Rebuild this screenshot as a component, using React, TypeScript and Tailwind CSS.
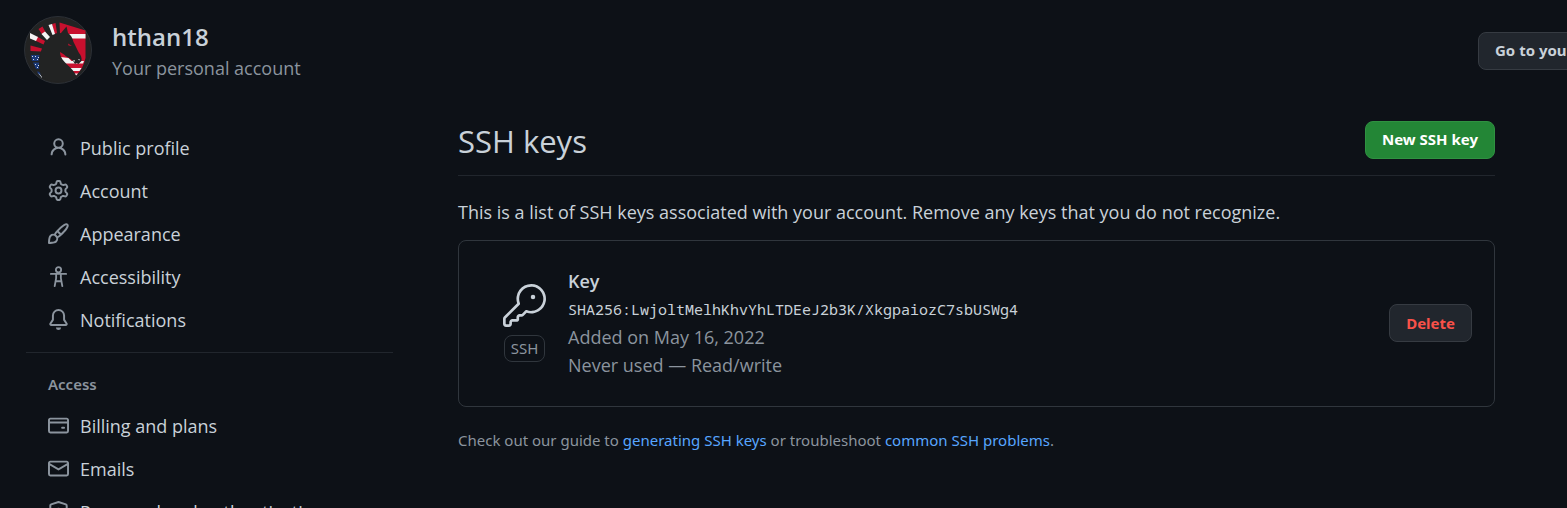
import type { ReactNode } from "react";

function Octicon({ children }: { children: ReactNode }) {
  return (
    <svg viewBox="0 0 16 16" className="size-[21px] shrink-0" fill="#8b949e" aria-hidden="true">
      {children}
    </svg>
  );
}

const icons = {
  person: (
    <Octicon>
      <path d="M10.561 8.073a6.005 6.005 0 0 1 3.432 5.142.75.75 0 1 1-1.498.07 4.5 4.5 0 0 0-8.99 0 .75.75 0 0 1-1.498-.07 6.004 6.004 0 0 1 3.431-5.142 3.999 3.999 0 1 1 5.123 0ZM10.5 5a2.5 2.5 0 1 0-5 0 2.5 2.5 0 0 0 5 0Z" />
    </Octicon>
  ),
  gear: (
    <Octicon>
      <path d="M8 0a8.2 8.2 0 0 1 .701.031C9.444.095 9.99.645 10.16 1.29l.288 1.107c.018.066.079.158.212.224.231.114.454.243.668.386.123.082.233.09.299.071l1.103-.303c.644-.176 1.392.021 1.82.63.27.385.506.792.704 1.218.315.675.111 1.422-.364 1.891l-.814.806c-.049.048-.098.147-.088.294.016.257.016.515 0 .772-.01.147.038.246.088.294l.814.806c.475.469.679 1.216.364 1.891a7.977 7.977 0 0 1-.704 1.217c-.428.61-1.176.807-1.82.63l-1.102-.302c-.067-.019-.177-.011-.3.071a5.909 5.909 0 0 1-.668.386c-.133.066-.194.158-.211.224l-.29 1.106c-.168.646-.715 1.196-1.458 1.26a8.006 8.006 0 0 1-1.402 0c-.743-.064-1.289-.614-1.458-1.26l-.289-1.106c-.018-.066-.079-.158-.212-.224a5.738 5.738 0 0 1-.668-.386c-.123-.082-.233-.09-.299-.071l-1.103.303c-.644.176-1.392-.021-1.82-.63a8.12 8.12 0 0 1-.704-1.218c-.315-.675-.111-1.422.363-1.891l.815-.806c.05-.048.098-.147.088-.294a6.214 6.214 0 0 1 0-.772c.01-.147-.038-.246-.088-.294l-.815-.806C.635 6.045.431 5.298.746 4.623a7.92 7.92 0 0 1 .704-1.217c.428-.61 1.176-.807 1.82-.63l1.102.302c.067.019.177.011.3-.071.214-.143.437-.272.668-.386.133-.066.194-.158.211-.224l.29-1.106C6.009.645 6.556.095 7.299.03 7.53.01 7.764 0 8 0Zm-.571 1.525c-.036.003-.108.036-.137.146l-.289 1.105c-.147.561-.549.967-.998 1.189-.173.086-.34.183-.5.29-.417.278-.97.423-1.529.27l-1.103-.303c-.109-.03-.175.016-.195.045-.22.312-.412.644-.573.99-.014.031-.021.11.059.19l.815.806c.411.406.562.957.53 1.456a4.709 4.709 0 0 0 0 .582c.032.499-.119 1.05-.53 1.456l-.815.806c-.081.08-.073.159-.059.19.162.346.353.677.573.989.02.03.085.076.195.046l1.102-.303c.56-.153 1.113-.008 1.53.27.161.107.328.204.501.29.447.222.85.629.997 1.189l.289 1.105c.029.109.101.143.137.146a6.6 6.6 0 0 0 1.142 0c.036-.003.108-.036.137-.146l.289-1.105c.147-.561.549-.967.998-1.189.173-.086.34-.183.5-.29.417-.278.97-.423 1.529-.27l1.103.303c.109.029.175-.016.195-.045.22-.313.411-.644.573-.99.014-.031.021-.11-.059-.19l-.815-.806c-.411-.406-.562-.957-.53-1.456a4.709 4.709 0 0 0 0-.582c-.032-.499.119-1.05.53-1.456l.815-.806c.081-.08.073-.159.059-.19a6.464 6.464 0 0 0-.573-.989c-.02-.03-.085-.076-.195-.046l-1.102.303c-.56.153-1.113.008-1.53-.27a4.44 4.44 0 0 0-.501-.29c-.447-.222-.85-.629-.997-1.189l-.289-1.105c-.029-.11-.101-.143-.137-.146a6.6 6.6 0 0 0-1.142 0ZM11 8a3 3 0 1 1-6 0 3 3 0 0 1 6 0ZM9.5 8a1.5 1.5 0 1 0-3.001.001A1.5 1.5 0 0 0 9.5 8Z" />
    </Octicon>
  ),
  paintbrush: (
    <Octicon>
      <path d="M11.134 1.535c.7-.509 1.416-.942 2.076-1.155.649-.21 1.463-.267 2.069.34.603.601.568 1.411.368 2.07-.202.668-.624 1.39-1.125 2.096-1.011 1.424-2.496 2.987-3.775 4.249-1.098 1.084-2.132 1.839-3.04 2.3a3.744 3.744 0 0 1-1.055 3.217c-.431.431-1.065.691-1.657.861-.614.177-1.294.287-1.914.357A21.151 21.151 0 0 1 .797 16H.743l.007-.75H.749L.742 16a.75.75 0 0 1-.743-.742l.743-.008-.742.007v-.054a21.25 21.25 0 0 1 .13-2.284c.067-.647.187-1.287.358-1.914.17-.591.43-1.226.86-1.657a3.746 3.746 0 0 1 3.227-1.054c.466-.893 1.225-1.907 2.314-2.982 1.271-1.255 2.833-2.75 4.245-3.777ZM1.62 13.089c-.051.464-.086.929-.104 1.395.466-.018.932-.053 1.396-.104a10.511 10.511 0 0 0 1.668-.309c.526-.151.856-.325 1.011-.48a2.25 2.25 0 1 0-3.182-3.182c-.155.155-.329.485-.48 1.01a10.515 10.515 0 0 0-.309 1.67Zm10.396-10.34c-1.224.89-2.605 2.189-3.822 3.384l1.718 1.718c1.21-1.205 2.51-2.597 3.387-3.833.47-.662.78-1.227.912-1.662.134-.444.032-.551.009-.575h-.001V1.78c-.014-.014-.113-.113-.548.027-.432.14-.995.462-1.655.942Zm-4.832 7.266-.001.001a9.859 9.859 0 0 0 1.63-1.142L7.155 7.216a9.7 9.7 0 0 0-1.161 1.607c.482.302.889.71 1.19 1.192Z" />
    </Octicon>
  ),
  accessibility: (
    <Octicon>
      <g fill="none" stroke="#8b949e" strokeWidth="1.4" strokeLinecap="round" strokeLinejoin="round">
        <circle cx="8" cy="2.9" r="2" />
        <path d="M2.2 6h11.6M6.2 6v3.3l-1.1 6M9.8 6v3.3l1.1 6M5.7 11.6h4.6" />
      </g>
    </Octicon>
  ),
  bell: (
    <Octicon>
      <path d="M8 16a2 2 0 0 0 1.985-1.75c.017-.137-.097-.25-.235-.25h-3.5c-.138 0-.252.113-.235.25A2 2 0 0 0 8 16ZM3 5a5 5 0 0 1 10 0v2.947c0 .05.015.098.042.139l1.703 2.555A1.519 1.519 0 0 1 13.482 13H2.518a1.516 1.516 0 0 1-1.263-2.36l1.703-2.554A.255.255 0 0 0 3 7.947Zm5-3.5A3.5 3.5 0 0 0 4.5 5v2.947c0 .346-.102.683-.294.97l-1.703 2.556a.017.017 0 0 0-.003.01l.001.006c0 .002.002.004.004.006l.006.004.007.001h10.964l.007-.001.006-.004.004-.006.001-.007a.017.017 0 0 0-.003-.01l-1.703-2.554a1.745 1.745 0 0 1-.294-.97V5A3.5 3.5 0 0 0 8 1.5Z" />
    </Octicon>
  ),
  card: (
    <Octicon>
      <path d="M10.75 9a.75.75 0 0 0 0 1.5h1.5a.75.75 0 0 0 0-1.5h-1.5Z" />
      <path d="M0 3.75C0 2.784.784 2 1.75 2h12.5c.966 0 1.75.784 1.75 1.75v8.5A1.75 1.75 0 0 1 14.25 14H1.75A1.75 1.75 0 0 1 0 12.25ZM14.5 6.5h-13v5.75c0 .138.112.25.25.25h12.5a.25.25 0 0 0 .25-.25Zm0-2.75a.25.25 0 0 0-.25-.25H1.75a.25.25 0 0 0-.25.25V5h13Z" />
    </Octicon>
  ),
  mail: (
    <Octicon>
      <path d="M1.75 2h12.5c.966 0 1.75.784 1.75 1.75v8.5A1.75 1.75 0 0 1 14.25 14H1.75A1.75 1.75 0 0 1 0 12.25v-8.5C0 2.784.784 2 1.75 2ZM1.5 12.251c0 .138.112.25.25.25h12.5a.25.25 0 0 0 .25-.25V5.809L8.38 9.397a.75.75 0 0 1-.76 0L1.5 5.809v6.442Zm13-8.181v-.32a.25.25 0 0 0-.25-.25H1.75a.25.25 0 0 0-.25.25v.32L8 7.88Z" />
    </Octicon>
  ),
  shield: (
    <Octicon>
      <g fill="none" stroke="#8b949e" strokeWidth="1.5" strokeLinejoin="round">
        <path d="M8 .8 13.6 2.6a1 1 0 0 1 .65.95V7c0 3.6-1.7 6.4-6.25 8.2C3.45 13.4 1.75 10.6 1.75 7V3.55a1 1 0 0 1 .65-.95Z" />
        <path d="M8 7v4" strokeLinecap="round" />
        <circle cx="8" cy="6.5" r=".7" />
      </g>
    </Octicon>
  ),
};

function NavItem({ icon, label }: { icon: ReactNode; label: string }) {
  return (
    <li>
      <a href="#" className="flex h-[43px] items-center gap-[11px] pl-[22px] whitespace-nowrap">
        {icon}
        {label}
      </a>
    </li>
  );
}

function Avatar() {
  return (
    <svg viewBox="0 0 68 68" className="size-[68px] shrink-0" role="img" aria-label="hthan18">
      <circle cx="34" cy="34" r="33.5" fill="#222323" stroke="#2c3036" />
      <path d="M35.5 6.5 61.5 14.5V42C60 49 57 55 52 59.5L44 53 36 42V18Z" fill="#c8102e" />
      <path d="M40 18h21.5v4.5H40ZM36.5 41l8 1 3 3H60l-1 2.500H40ZM40 52h17.500l-2 3H44ZM48 57.500h6l-2 2Z" fill="#f4f4f4" />
      <g fill="#c8102e">
        <path d="M6.5 29.5 18 32.5 17 35.5 6.5 35ZM13 20.5 21 25 19.5 28.5 11 24.5ZM14.5 13 18.5 10.5 22 17 18.5 19ZM28 8 31.5 7 33 17 30.5 18Z" />
      </g>
      <g fill="#f4f4f4">
        <path d="M6 17 14 21 12 25 6 22.5ZM17.5 18 21 15.5 26 21 23 24ZM24.5 9 28 8 31 18 28.5 19Z" />
      </g>
      <path d="M7 39h8.5l-1 6H8ZM9 46.5h6V53h-3ZM13.5 55l3 2v3l-3-3Z" fill="#1b3a7a" />
      <path
        d="M8 40h1v1H8ZM11 40h1v1h-1ZM14 41h1v1h-1ZM9 43h1v1H9ZM13 43h1v1h-1ZM11 48h1v1h-1ZM14 49h1v1h-1ZM13 51h1v1h-1ZM14 57l4 3v2Z"
        fill="#d5dbe8"
      />
      <path
        fill="#222323"
        d="M17 60C15 52 15 40 19 31 22 25 27 20 34 17.5L37 17 42.500 10.500 44 17C47 19 48.500 22 49.500 26 51.500 30 53 33 55 37 57 39 58 42 57.500 45L54.500 48 52.500 47 51 48 49 45C46 42 42 41 40 38.500L36 36C36.500 43 40 45 43 48.500 47 52 51 56 53 62 42 67 24 67 17 60Z"
      />
      <path d="M44 27.5 48 30l-3.5-.5Z" fill="#c8102e" />
      <path d="M48.5 45l2-1 .5 1.5ZM54 43.5l1.500-.5v1.500Z" fill="#f4f4f4" />
    </svg>
  );
}

export default function App() {
  return (
    <div className="h-screen overflow-hidden bg-[#0d1117] font-['Open_Sans','Noto_Sans',sans-serif] text-[18px] leading-[28px] text-[#c9d1d9]">
      <header className="flex items-start pt-4 pl-6">
        <Avatar />
        <div className="ml-5 pt-[7px]">
          <h1 className="text-[24px] leading-[28px] font-semibold">hthan18</h1>
          <p className="pt-[3px] text-[#8b949e]">Your personal account</p>
        </div>
        <div className="mt-4 ml-auto w-[89px] overflow-hidden">
          <button
            type="button"
            className="flex h-[38px] items-center rounded-lg border border-[#363b42] bg-[#21262d] px-4 pb-[2px] font-['Noto_Sans',sans-serif] text-[15px] font-bold whitespace-nowrap"
          >
            Go to your personal profile
          </button>
        </div>
      </header>

      <div className="flex pt-[37px] pr-[72px] pl-[26px]">
        <nav aria-label="Settings" className="mr-[65px] w-[367px] shrink-0 pt-[5px]">
          <ul>
            <NavItem icon={icons.person} label="Public profile" />
            <NavItem icon={icons.gear} label="Account" />
            <NavItem icon={icons.paintbrush} label="Appearance" />
            <NavItem icon={icons.accessibility} label="Accessibility" />
            <NavItem icon={icons.bell} label="Notifications" />
          </ul>
          <hr className="mt-[11px] border-[#21262d]" />
          <h2 className="pt-[17px] pb-[6px] pl-[22px] font-['Noto_Sans',sans-serif] text-[15px] font-semibold text-[#8b949e]">
            Access
          </h2>
          <ul>
            <NavItem icon={icons.card} label="Billing and plans" />
            <NavItem icon={icons.mail} label="Emails" />
            <NavItem icon={icons.shield} label="Password and authentication" />
          </ul>
        </nav>

        <main className="min-w-0 flex-1">
          <div className="flex items-start justify-between border-b border-[#21262d] pb-4">
            <h2 className="pt-[2px] text-[31px] leading-[36px]">SSH keys</h2>
            <button
              type="button"
              className="flex h-[38px] items-center rounded-lg border border-[#2f9141] bg-[#238636] px-4 pb-[2px] font-['Noto_Sans',sans-serif] text-[15px] font-bold text-white"
            >
              New SSH key
            </button>
          </div>

          <p className="pt-[22px] pb-[14px]">
            This is a list of SSH keys associated with your account. Remove any keys that you do not recognize.
          </p>

          <section className="flex items-center rounded-lg border border-[#30363d] pt-[26px] pr-[22px] pb-[27px] pl-11">
            <div className="flex w-[43px] flex-col items-center gap-2">
              <svg viewBox="0 0 24 24" className="size-[43px]" fill="#c9d1d9" aria-hidden="true">
                <circle cx="16.75" cy="7.25" r="1.25" />
                <path d="M15.75 0a8.25 8.25 0 1 1-2.541 16.101l-1.636 1.636a1.744 1.744 0 0 1-1.237.513H9.25a.25.25 0 0 0-.25.25v1.448a.876.876 0 0 1-.256.619l-.214.213a.75.75 0 0 1-.545.22H5.25a.25.25 0 0 0-.25.25v1A1.75 1.75 0 0 1 3.25 24h-1.5A1.75 1.75 0 0 1 0 22.25v-2.836c0-.464.185-.908.513-1.236l7.386-7.388A8.249 8.249 0 0 1 15.75 0ZM9 8.25a6.733 6.733 0 0 0 .463 2.462.75.75 0 0 1-.168.804l-7.722 7.721a.25.25 0 0 0-.073.177v2.836c0 .138.112.25.25.25h1.5a.25.25 0 0 0 .25-.25v-1c0-.966.784-1.75 1.75-1.75H7.5v-1c0-.966.784-1.75 1.75-1.75h1.086a.25.25 0 0 0 .177-.073l1.971-1.972a.75.75 0 0 1 .804-.168A6.75 6.75 0 1 0 9 8.25Z" />
              </svg>
              <span className="rounded-lg border border-[#30363d] px-[6px] font-['Noto_Sans',sans-serif] text-[15px] leading-[25px] text-[#8b949e]">
                SSH
              </span>
            </div>
            <div className="ml-[22px]">
              <h3 className="font-semibold">Key</h3>
              <code className="block font-['Noto_Sans_Mono','DejaVu_Sans_Mono',monospace] text-[15px]">
                SHA256:LwjoltMelhKhvYhLTDEeJ2b3K/XkgpaiozC7sbUSWg4
              </code>
              <p className="text-[#8b949e]">Added on May 16, 2022</p>
              <p className="text-[#8b949e]">Never used — Read/write</p>
            </div>
            <button
              type="button"
              className="ml-auto flex h-[38px] items-center rounded-lg border border-[#363b42] bg-[#21262d] px-4 font-['Noto_Sans',sans-serif] text-[15px] font-bold text-[#f85149]"
            >
              Delete
            </button>
          </section>

          <p className="pt-[19px] font-['Noto_Sans',sans-serif] text-[15px] text-[#8b949e]">
            Check out our guide to{" "}
            <a href="#" className="text-[#58a6ff]">
              generating SSH keys
            </a>{" "}
            or troubleshoot{" "}
            <a href="#" className="text-[#58a6ff]">
              common SSH problems
            </a>
            .
          </p>
        </main>
      </div>
    </div>
  );
}
